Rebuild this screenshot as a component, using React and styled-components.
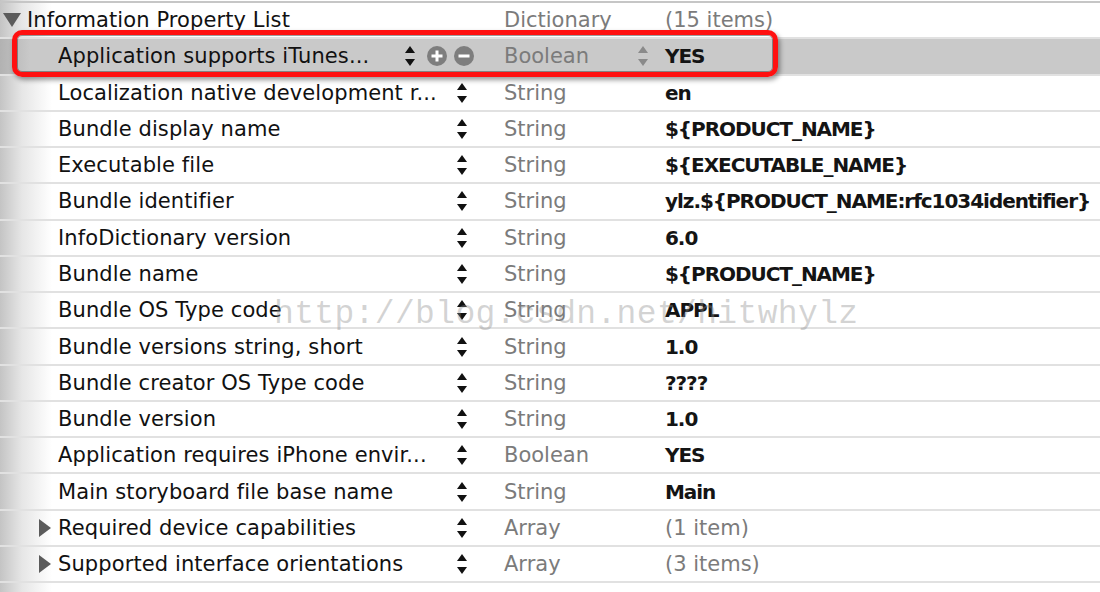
import React from 'react';
import styled, { createGlobalStyle } from 'styled-components';

const GlobalStyle = createGlobalStyle`
    html, body { margin:0; padding:0; background:#ffffff; }
    body { font-family: "DejaVu Sans", "Liberation Sans", sans-serif; }
`;

const Page = styled.div`
    position:relative;
    width:1100px;
    height:592px;
    overflow:hidden;
    padding-top:1px;
    box-sizing:border-box;
    background:linear-gradient(to right, #c4c4c4 0px, #e6e6e6 22px, #ffffff 52px);
`;

const Table = styled.div`
    border-top:2px solid #c6c6c6;
`;

const Row = styled.div`
    display:grid;
    grid-template-columns:490px 170px 1fr;
    height:36.27px;
    box-sizing:border-box;
    border-bottom:2px solid #e1e1e1;
    background:${({$selected}) => $selected ? 'linear-gradient(to right, #b2b2b2 0px, #c9c9c9 30px)' : 'transparent'};
`;

const KeyCell = styled.div`
    display:flex;
    align-items:center;
    min-width:0;
    padding-left:${({$level}) => $level === 0 ? '3px' : '37px'};
    padding-right:${({$selected}) => $selected ? '16px' : '22px'};
`;

const DisclosureSlot = styled.div`
    flex:none;
    width:${({$level}) => $level === 0 ? '18px' : '14px'};
    margin-right:${({$level}) => $level === 0 ? '6px' : '7px'};
    display:flex;
    align-items:center;
    justify-content:center;
`;

const KeyName = styled.span`
    flex:1;
    min-width:0;
    white-space:nowrap;
    overflow:hidden;
    font-size:21px;
    color:#111111;
    letter-spacing:0.1px;
`;

const Controls = styled.div`
    flex:none;
    display:flex;
    align-items:center;
    margin-left:auto;
`;

const RoundButton = styled.svg`
    margin-left:${({$gap}) => $gap}px;
`;

const TypeCell = styled.div`
    display:flex;
    align-items:center;
    padding-left:14px;
    padding-right:11px;
    font-size:21px;
    color:#7b7b7b;
    white-space:nowrap;
`;

const TypeName = styled.span`
    flex:1;
`;

const ValueCell = styled.div`
    display:flex;
    align-items:center;
    padding-left:5px;
    white-space:nowrap;
    overflow:hidden;
    font-size:${({$muted}) => $muted ? '21px' : '20px'};
    font-weight:${({$muted}) => $muted ? 400 : 700};
    letter-spacing:${({$muted}) => $muted ? '0px' : '-1.05px'};
    color:${({$muted}) => $muted ? '#7b7b7b' : '#141414'};
`;

const Highlight = styled.div`
    position:absolute;
    left:12px;
    top:30px;
    width:766px;
    height:47px;
    box-sizing:border-box;
    border:5px solid #ff1010;
    border-radius:10px;
    box-shadow:2px 3px 5px rgba(0,0,0,0.4), inset 0 0 0 1px rgba(60,60,60,0.5);
    pointer-events:none;
`;

const Watermark = styled.div`
    position:absolute;
    left:274px;
    top:296px;
    font-family:"Liberation Mono", "DejaVu Sans Mono", monospace;
    font-size:33px;
    letter-spacing:0.35px;
    color:rgba(140,140,140,0.38);
    white-space:nowrap;
    pointer-events:none;
`;

const Stepper = ({color = '#111111'}) => (
    <svg width="12" height="22" viewBox="0 0 12 22">
        <polygon points="6,1 11,8 1,8" fill={color}/>
        <polygon points="1,14 11,14 6,21" fill={color}/>
    </svg>
);

const Disclosure = ({open}) => open ? (
    <svg width="18" height="16" viewBox="0 0 18 16">
        <polygon points="0,1 18,1 9,15" fill="#5b5b5b"/>
    </svg>
) : (
    <svg width="13" height="18" viewBox="0 0 13 18">
        <polygon points="1,0 13,9 1,18" fill="#5b5b5b"/>
    </svg>
);

const PlusButton = ({gap}) => (
    <RoundButton $gap={gap} width="20" height="20" viewBox="0 0 20 20">
        <circle cx="10" cy="10" r="10" fill="#7e7e7e"/>
        <rect x="4.5" y="8.5" width="11" height="3" fill="#ffffff"/>
        <rect x="8.5" y="4.5" width="3" height="11" fill="#ffffff"/>
    </RoundButton>
);

const MinusButton = ({gap}) => (
    <RoundButton $gap={gap} width="20" height="20" viewBox="0 0 20 20">
        <circle cx="10" cy="10" r="10" fill="#7e7e7e"/>
        <rect x="4.5" y="8.5" width="11" height="3" fill="#ffffff"/>
    </RoundButton>
);

const rows = [
    {key:'Application supports iTunes...', type:'Boolean', value:'YES', selected:true},
    {key:'Localization native development r...', type:'String', value:'en'},
    {key:'Bundle display name', type:'String', value:'${PRODUCT_NAME}'},
    {key:'Executable file', type:'String', value:'${EXECUTABLE_NAME}'},
    {key:'Bundle identifier', type:'String', value:'ylz.${PRODUCT_NAME:rfc1034identifier}'},
    {key:'InfoDictionary version', type:'String', value:'6.0'},
    {key:'Bundle name', type:'String', value:'${PRODUCT_NAME}'},
    {key:'Bundle OS Type code', type:'String', value:'APPL'},
    {key:'Bundle versions string, short', type:'String', value:'1.0'},
    {key:'Bundle creator OS Type code', type:'String', value:'????'},
    {key:'Bundle version', type:'String', value:'1.0'},
    {key:'Application requires iPhone envir...', type:'Boolean', value:'YES'},
    {key:'Main storyboard file base name', type:'String', value:'Main'},
    {key:'Required device capabilities', type:'Array', value:'(1 item)', muted:true, collapsed:true},
    {key:'Supported interface orientations', type:'Array', value:'(3 items)', muted:true, collapsed:true},
];

const App = () => (
    <>
        <GlobalStyle/>
        <Page>
            <Table>
                <Row>
                    <KeyCell $level={0}>
                        <DisclosureSlot $level={0}><Disclosure open/></DisclosureSlot>
                        <KeyName>Information Property List</KeyName>
                    </KeyCell>
                    <TypeCell><TypeName>Dictionary</TypeName></TypeCell>
                    <ValueCell $muted>(15 items)</ValueCell>
                </Row>
                {rows.map((r) => (
                    <Row key={r.key} $selected={r.selected}>
                        <KeyCell $level={1} $selected={r.selected}>
                            <DisclosureSlot $level={1}>{r.collapsed && <Disclosure/>}</DisclosureSlot>
                            <KeyName>{r.key}</KeyName>
                            <Controls>
                                <Stepper/>
                                {r.selected && <PlusButton gap={11}/>}
                                {r.selected && <MinusButton gap={7}/>}
                            </Controls>
                        </KeyCell>
                        <TypeCell>
                            <TypeName>{r.type}</TypeName>
                            {r.selected && <Stepper color="#8a8a8a"/>}
                        </TypeCell>
                        <ValueCell $muted={r.muted}>{r.value}</ValueCell>
                    </Row>
                ))}
            </Table>
            <Highlight/>
            <Watermark>http://blog.csdn.net/hitwhylz</Watermark>
        </Page>
    </>
);

export default App;
